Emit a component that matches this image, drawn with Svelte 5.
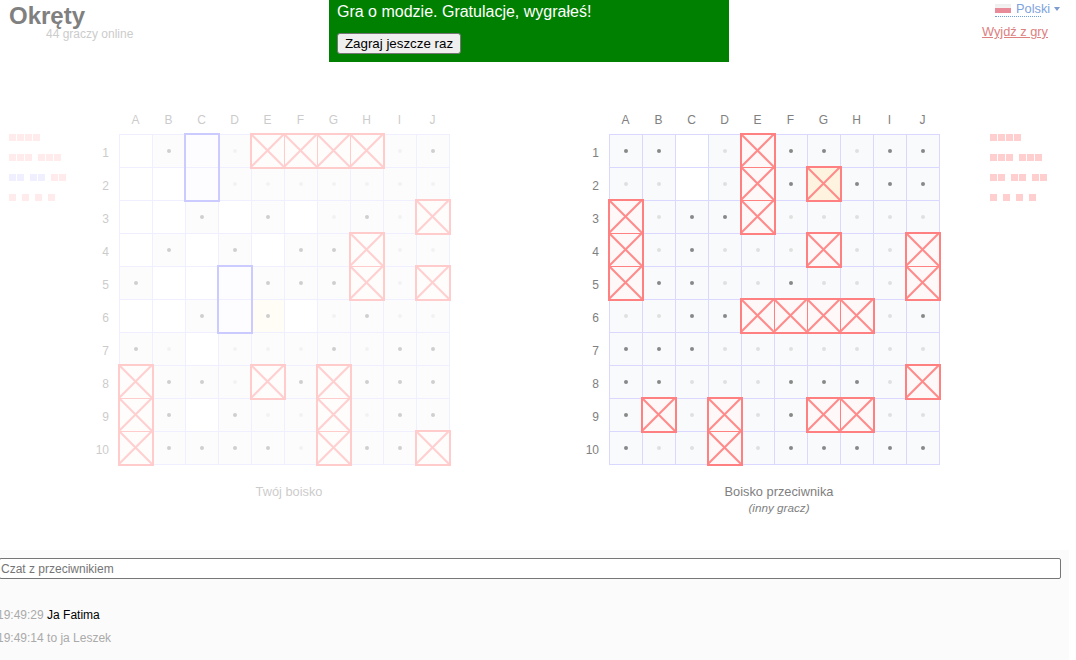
<script>
	const letters = 'ABCDEFGHIJ'.split('');
	const numbers = [1, 2, 3, 4, 5, 6, 7, 8, 9, 10];

	// D dark dot, L light dot, E empty, X hit, Y last hit, S own ship, M last miss
	const myRows = [
		'EDSLXXXXLD',
		'EESLLLLLLL',
		'EEDEDELDLX',
		'EDEDEDDXLL',
		'DEESDDDXLX',
		'EEDSMELDLL',
		'DLELLLDLDD',
		'XDDLXDXDDD',
		'XDEDLLXLDD',
		'XDDDDLXDDX'
	];
	const enemyRows = [
		'DDELXDDLDD',
		'LLELXDYDDD',
		'XLDDXLLLLL',
		'XLDLLLXLLX',
		'XDDLLDLLLX',
		'LLDDXXXXLD',
		'DDDLLLLLLL',
		'DDLLLDDDLX',
		'DXLXLDXXLL',
		'DLLXLDDDDD'
	];

	// col, row, width, height in cells
	const myShips = [
		{ c: 2, r: 0, w: 1, h: 2, own: true },
		{ c: 3, r: 4, w: 1, h: 2, own: true },
		{ c: 4, r: 0, w: 4, h: 1 },
		{ c: 9, r: 2, w: 1, h: 1 },
		{ c: 7, r: 3, w: 1, h: 2 },
		{ c: 9, r: 4, w: 1, h: 1 },
		{ c: 0, r: 7, w: 1, h: 3 },
		{ c: 4, r: 7, w: 1, h: 1 },
		{ c: 6, r: 7, w: 1, h: 3 },
		{ c: 9, r: 9, w: 1, h: 1 }
	];
	const enemyShips = [
		{ c: 4, r: 0, w: 1, h: 3 },
		{ c: 6, r: 1, w: 1, h: 1 },
		{ c: 0, r: 2, w: 1, h: 3 },
		{ c: 6, r: 3, w: 1, h: 1 },
		{ c: 9, r: 3, w: 1, h: 2 },
		{ c: 4, r: 5, w: 4, h: 1 },
		{ c: 9, r: 7, w: 1, h: 1 },
		{ c: 1, r: 8, w: 1, h: 1 },
		{ c: 3, r: 8, w: 1, h: 2 },
		{ c: 6, r: 8, w: 2, h: 1 }
	];

	const fields = [
		{ rows: myRows, ships: myShips, cls: 'mine' },
		{ rows: enemyRows, ships: enemyShips, cls: 'enemy' }
	];

	const myFleet = [
		[[4, 'k']],
		[[3, 'k'], [3, 'k']],
		[[2, 'a'], [2, 'a'], [2, 'k']],
		[[1, 'k'], [1, 'k'], [1, 'k'], [1, 'k']]
	];
	const enemyFleet = [
		[[4, 'k']],
		[[3, 'k'], [3, 'k']],
		[[2, 'k'], [2, 'k'], [2, 'k']],
		[[1, 'k'], [1, 'k'], [1, 'k'], [1, 'k']]
	];

	const repeat = (n) => Array.from({ length: n });
</script>

{#snippet fleet(rows, cls)}
	<div class="fleet {cls}">
		{#each rows as row}
			<div class="fleet-row">
				{#each row as [size, state]}
					<div class="fleet-ship">
						{#each repeat(size) as _}
							<span class="part {state}"></span>
						{/each}
					</div>
				{/each}
			</div>
		{/each}
	</div>
{/snippet}

{#snippet field(f)}
	<div class="field-grid">
		<div class="head">
			{#each letters as l}
				<span>{l}</span>
			{/each}
		</div>
		<div class="body">
			<div class="nums">
				{#each numbers as n}
					<span>{n}</span>
				{/each}
			</div>
			<div class="board">
				{#each f.rows as row}
					{#each row.split('') as cell}
						<div class="cell {cell}">
							{#if cell === 'D' || cell === 'L' || cell === 'M'}
								<span class="dot"></span>
							{/if}
							{#if cell === 'X' || cell === 'Y'}
								<svg viewBox="0 0 33 33" class="cross">
									<line x1="0" y1="0" x2="33" y2="33" />
									<line x1="33" y1="0" x2="0" y2="33" />
								</svg>
							{/if}
						</div>
					{/each}
				{/each}
				{#each f.ships as s}
					<div
						class="ship"
						class:own={s.own}
						style="left:{s.c * 33 - 1}px;top:{s.r * 33 - 1}px;width:{s.w * 33 + 3}px;height:{s.h * 33 + 3}px"
					></div>
				{/each}
			</div>
		</div>
	</div>
{/snippet}

<div class="page">
	<header>
		<div class="brand">
			<h1>Okręty</h1>
			<div class="online">44 graczy online</div>
		</div>
		<div class="notice">
			<p>Gra o modzie. Gratulacje, wygrałeś!</p>
			<button type="button">Zagraj jeszcze raz</button>
		</div>
		<div class="account">
			<div class="lang">
				<div class="lang-name">
					<span class="flag"></span>
					<span class="lang-text">Polski</span>
				</div>
				<span class="caret"></span>
			</div>
			<a href="#leave" class="leave">Wyjdź z gry</a>
		</div>
	</header>

	<main>
		<div class="side mine">
			{@render fleet(myFleet, 'mine')}
			<div class="field mine">
				{@render field(fields[0])}
				<div class="caption">Twój boisko</div>
			</div>
		</div>
		<div class="side enemy">
			<div class="field">
				{@render field(fields[1])}
				<div class="caption">
					Boisko przeciwnika
					<em>(inny gracz)</em>
				</div>
			</div>
			{@render fleet(enemyFleet, 'enemy')}
		</div>
	</main>

	<section class="chat">
		<input type="text" placeholder="Czat z przeciwnikiem" />
		<div class="messages">
			<div class="msg"><span class="time">19:49:29</span> <span class="me">Ja Fatima</span></div>
			<div class="msg"><span class="time">19:49:14</span> to ja Leszek</div>
		</div>
	</section>
</div>

<style>
	:global(body) {
		background: #fff;
		overflow: hidden;
	}

	.page {
		width: 1069px;
		height: 660px;
		overflow: hidden;
		font-family: 'Liberation Sans', Arial, sans-serif;
		font-size: 12px;
		color: #808080;
	}

	header {
		display: flex;
		height: 62px;
	}

	.brand {
		width: 329px;
		padding: 2px 0 0 9px;
		box-sizing: border-box;
	}

	h1 {
		margin: 0;
		font-size: 24px;
		line-height: 28px;
		font-weight: bold;
		color: #808080;
	}

	.online {
		margin: -3px 0 0 37px;
		line-height: 14px;
		color: #ccc;
	}

	.notice {
		width: 400px;
		padding: 0 8px;
		box-sizing: border-box;
		background: #008000;
		color: #fff;
	}

	.notice p {
		margin: 0 0 12px;
		padding-top: 3px;
		font-size: 16px;
		line-height: 18px;
	}

	.notice button {
		display: block;
		height: 21px;
		width: 124px;
		padding: 1px 6px;
		font-family: 'Liberation Sans', Arial, sans-serif;
		font-size: 13.33px;
		color: #000;
		background: #efefef;
		border: 1px solid #767676;
		border-radius: 3px;
	}

	.account {
		flex: 1;
		display: flex;
		flex-direction: column;
		align-items: flex-end;
		padding-right: 9px;
	}

	.lang {
		display: flex;
		align-items: center;
		height: 17px;
		gap: 13px;
	}

	.lang-name {
		display: flex;
		align-items: center;
		gap: 5px;
		width: 46px;
		height: 16px;
		white-space: nowrap;
		border-bottom: 1px dotted #6d9edd;
	}

	.lang-text {
		font-size: 12.8px;
		color: #7da3dc;
	}

	.flag {
		display: block;
		flex: none;
		width: 16px;
		height: 9px;
		margin-top: 1px;
		background: linear-gradient(#eeeeee 0, #f4f4f4 50%, #e98a98 50%);
	}

	.caret {
		display: block;
		width: 0;
		height: 0;
		border-left: 3.5px solid transparent;
		border-right: 3.5px solid transparent;
		border-top: 4px solid #7d9bcf;
	}

	.leave {
		margin: 8px 12px 0 0;
		font-size: 12.8px;
		line-height: 14px;
		color: #dd8080;
		text-decoration: underline;
	}

	main {
		display: flex;
		justify-content: space-between;
		height: 440px;
		margin-top: 48px;
		padding: 0 0 0 9px;
	}

	.side {
		display: flex;
		align-items: flex-start;
	}

	.side.enemy {
		padding-right: 27px;
	}

	.fleet {
		display: flex;
		flex-direction: column;
		gap: 13px;
		width: 80px;
		padding-top: 24px;
	}

	.fleet.enemy {
		margin-left: 50px;
	}

	.fleet.mine {
		opacity: 0.4;
	}

	.fleet-row {
		display: flex;
		gap: 6px;
		height: 7px;
	}

	.fleet-ship {
		display: flex;
		gap: 1px;
	}

	.part {
		display: block;
		width: 7px;
		height: 7px;
		background: #ffcfcf;
	}

	.fleet.mine .part.a {
		background: #d8d8ff;
	}

	.field.mine {
		opacity: 0.4;
		margin-right: 129px;
	}

	.head {
		display: grid;
		grid-template-columns: repeat(10, 33px);
		padding: 1px 0 0 30px;
		margin-bottom: 5px;
		line-height: 18px;
		text-align: center;
	}

	.body {
		display: flex;
	}

	.nums {
		display: grid;
		grid-auto-rows: 33px;
		width: 30px;
		padding-right: 10px;
		box-sizing: border-box;
		text-align: right;
	}

	.nums span {
		line-height: 39px;
	}

	.board {
		position: relative;
		display: grid;
		grid-template-columns: repeat(10, 33px);
		grid-auto-rows: 33px;
		border-right: 1px solid #dbd8ff;
		border-bottom: 1px solid #dbd8ff;
	}

	.cell {
		position: relative;
		display: flex;
		align-items: center;
		justify-content: center;
		box-sizing: border-box;
		border-left: 1px solid #dbd8ff;
		border-top: 1px solid #dbd8ff;
		background: #f9fafc;
	}

	.cell.E {
		background: #fff;
	}

	.cell.S {
		background: #fbfaff;
	}

	.cell.M {
		background: #fffbe8;
	}

	.cell.X {
		background: #fff8f8;
		border-color: #ff8080;
	}

	.cell.Y {
		background: #fdf3df;
		border-color: #ff8080;
	}

	.dot {
		width: 4px;
		height: 4px;
		border-radius: 50%;
		background: #e0e0e0;
	}

	.cell.D .dot,
	.cell.M .dot {
		background: #888;
	}

	.cross {
		position: absolute;
		left: -1px;
		top: -1px;
		width: 33px;
		height: 33px;
	}

	.cross line {
		stroke: #ff8a8a;
		stroke-width: 2;
	}

	.ship {
		position: absolute;
		box-sizing: border-box;
		border: 2px solid #ff8080;
	}

	.ship.own {
		border-color: #8080ff;
	}

	.caption {
		margin-top: 19px;
		padding-left: 39px;
		font-size: 12.8px;
		line-height: 16px;
		text-align: center;
	}

	.caption em {
		display: block;
		font-size: 11.7px;
	}

	.chat {
		height: 110px;
		padding-top: 8px;
		box-sizing: border-box;
		background: #fbfbfb;
	}

	.chat input {
		display: block;
		width: 1062px;
		height: 21px;
		margin-left: -1px;
		padding: 1px 1px;
		box-sizing: border-box;
		font-family: 'Liberation Sans', Arial, sans-serif;
		font-size: 12px;
		background: #fff;
		border: 1px solid #767676;
		border-radius: 2px;
		outline: none;
	}

	.chat input::placeholder {
		color: #757575;
		opacity: 1;
	}

	.messages {
		margin: 29px 0 0 -3px;
		color: #aaa;
	}

	.msg {
		line-height: 14px;
		margin-bottom: 9px;
	}

	.time {
		color: #aaa;
	}

	.me {
		color: #000;
	}
</style>
